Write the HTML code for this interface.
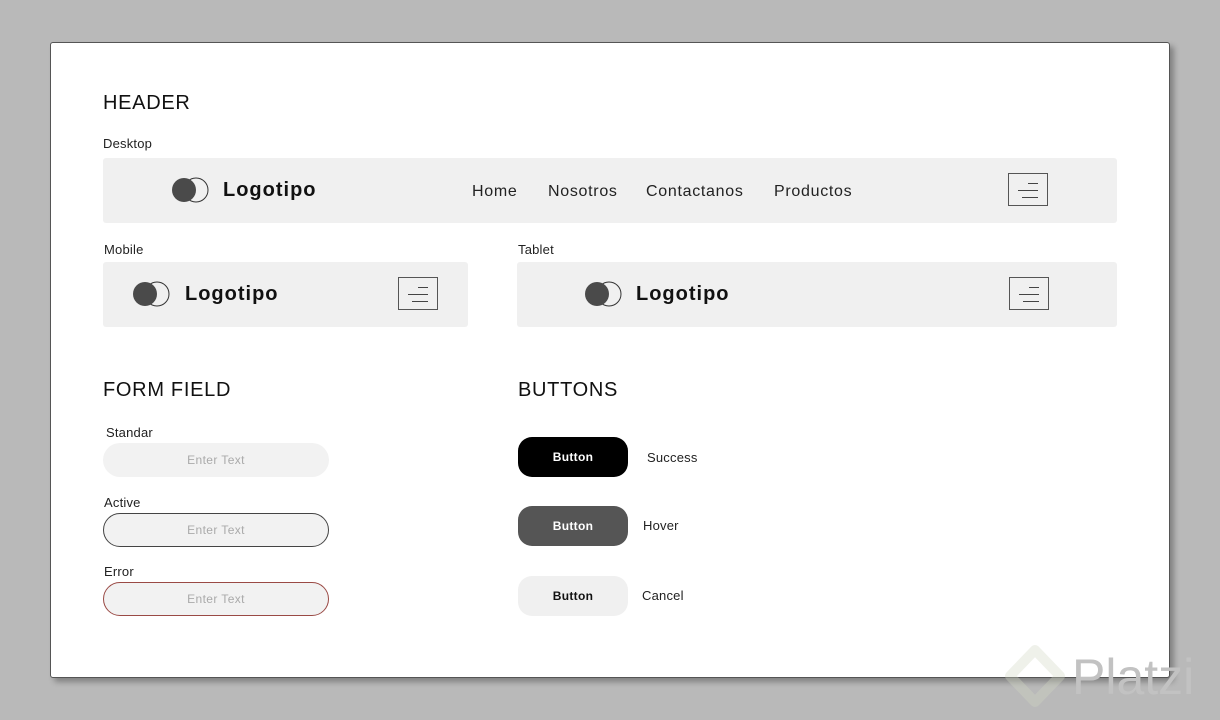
<!DOCTYPE html>
<html><head><meta charset="utf-8"><style>
*{margin:0;padding:0;box-sizing:border-box}
body{width:1220px;height:720px;background:#b9b9b9;position:relative;overflow:hidden;font-family:"Liberation Sans",sans-serif;color:#111}
.a{position:absolute}
.card{left:50px;top:42px;width:1120px;height:636px;background:#fff;border:1px solid #555;border-radius:3px;box-shadow:4px 4px 6px rgba(0,0,0,.3)}
.h{font-size:20px;letter-spacing:.7px;color:#111}
.s{font-size:13px;color:#222;letter-spacing:.2px}
.bar{background:#f0f0f0;border-radius:3px}
.logo{font-size:20px;font-weight:bold;color:#111;letter-spacing:1px}
.nav{font-size:16px;color:#222;letter-spacing:.7px}
.fld{width:226px;height:34px;border-radius:17px;background:#f2f2f2;font-size:12px;color:#aaa;text-align:center;line-height:34px;letter-spacing:.4px}
.btn{width:110px;height:40px;border-radius:14px;font-size:12px;font-weight:bold;text-align:center;line-height:40px;letter-spacing:.3px}
</style></head><body>
<div class="a card"></div>
<div class="a h" style="left:103px;top:92px">HEADER</div>
<div class="a s" style="left:103px;top:136px">Desktop</div>
<div class="a bar" style="left:103px;top:158px;width:1014px;height:65px"></div>
<svg class="a" style="left:170px;top:176px" width="42" height="28"><circle cx="26" cy="14" r="12" fill="none" stroke="#333" stroke-width="1"/><circle cx="14" cy="14" r="12" fill="#4a4a4a"/></svg>
<div class="a logo" style="left:223px;top:179px">Logotipo</div>
<div class="a nav" style="left:472px;top:183px">Home</div>
<div class="a nav" style="left:548px;top:183px">Nosotros</div>
<div class="a nav" style="left:646px;top:183px">Contactanos</div>
<div class="a nav" style="left:774px;top:183px">Productos</div>
<svg class="a" style="left:1008px;top:173px" width="40" height="34"><rect x=".5" y=".5" width="39" height="32" fill="none" stroke="#555"/><path d="M20 10.5H30M10 17.5H30M14 24.5H30" stroke="#444" stroke-width="1"/></svg>

<div class="a s" style="left:104px;top:242px">Mobile</div>
<div class="a bar" style="left:103px;top:262px;width:365px;height:65px"></div>
<svg class="a" style="left:131px;top:280px" width="42" height="28"><circle cx="26" cy="14" r="12" fill="none" stroke="#333"/><circle cx="14" cy="14" r="12" fill="#4a4a4a"/></svg>
<div class="a logo" style="left:185px;top:283px">Logotipo</div>
<svg class="a" style="left:398px;top:277px" width="40" height="34"><rect x=".5" y=".5" width="39" height="32" fill="none" stroke="#555"/><path d="M20 10.5H30M10 17.5H30M14 24.5H30" stroke="#444"/></svg>

<div class="a s" style="left:518px;top:242px">Tablet</div>
<div class="a bar" style="left:517px;top:262px;width:600px;height:65px"></div>
<svg class="a" style="left:583px;top:280px" width="42" height="28"><circle cx="26" cy="14" r="12" fill="none" stroke="#333"/><circle cx="14" cy="14" r="12" fill="#4a4a4a"/></svg>
<div class="a logo" style="left:636px;top:283px">Logotipo</div>
<svg class="a" style="left:1009px;top:277px" width="40" height="34"><rect x=".5" y=".5" width="39" height="32" fill="none" stroke="#555"/><path d="M20 10.5H30M10 17.5H30M14 24.5H30" stroke="#444"/></svg>

<div class="a h" style="left:103px;top:379px">FORM FIELD</div>
<div class="a s" style="left:106px;top:425px">Standar</div>
<div class="a fld" style="left:103px;top:443px">Enter Text</div>
<div class="a s" style="left:104px;top:495px">Active</div>
<div class="a fld" style="left:103px;top:513px;border:1px solid #444;line-height:32px">Enter Text</div>
<div class="a s" style="left:104px;top:564px">Error</div>
<div class="a fld" style="left:103px;top:582px;border:1px solid #9a4a45;line-height:32px">Enter Text</div>

<div class="a h" style="left:518px;top:379px">BUTTONS</div>
<div class="a btn" style="left:518px;top:437px;background:#000;color:#fff">Button</div>
<div class="a s" style="left:647px;top:450px">Success</div>
<div class="a btn" style="left:518px;top:506px;background:#555;color:#fff">Button</div>
<div class="a s" style="left:643px;top:518px">Hover</div>
<div class="a btn" style="left:518px;top:576px;background:#f0f0f0;color:#111">Button</div>
<div class="a s" style="left:642px;top:588px">Cancel</div>

<svg class="a" style="left:1000px;top:640px" width="70" height="80"><path d="M35 10L60 36L35 62L10 36Z" fill="none" stroke="#d0d6c2" stroke-width="10" stroke-linejoin="round" opacity=".35"/></svg>
<div class="a" style="left:1072px;top:648px;font-size:50px;color:#c2c2c2">Platzi</div>
</body></html>
